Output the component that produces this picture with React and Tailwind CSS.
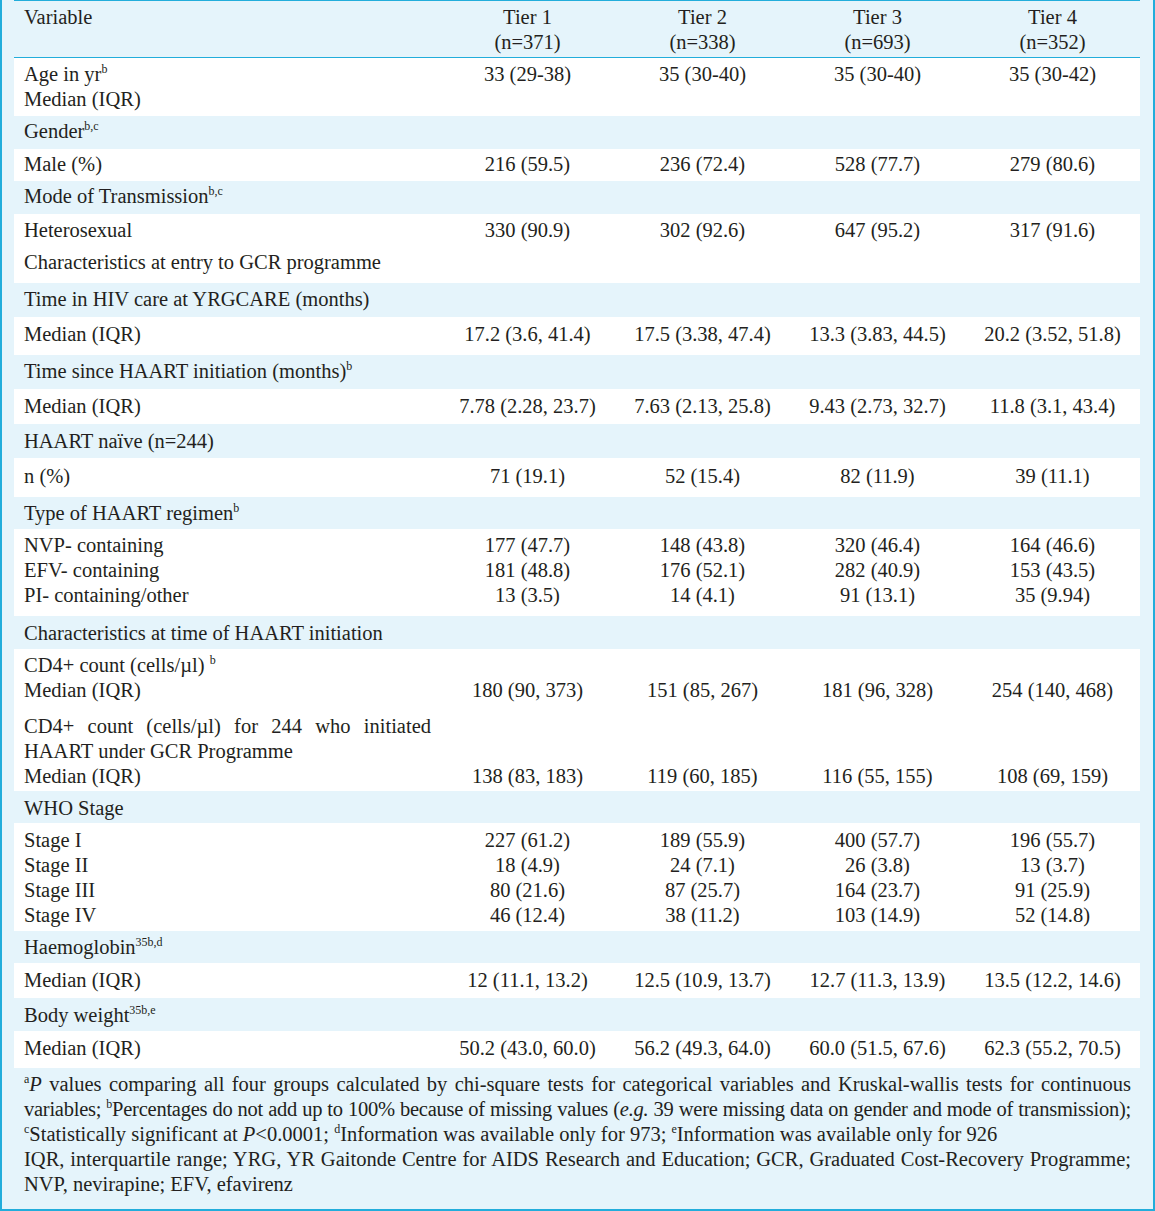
import React from "react";

const Sup = ({ children }) => (
    <span className="text-[12px] leading-none align-[8px]">{children}</span>
);

// each row: bg, height / padding classes, lines [label, values?]
const rows = [
    { white: true, cls: "h-[58px] pt-[4px]", lines: [[<>Age in yr<Sup>b</Sup></>, ["33 (29-38)", "35 (30-40)", "35 (30-40)", "35 (30-42)"]], ["Median (IQR)"]] },
    { cls: "h-[33px] pt-[3px]", lines: [[<>Gender<Sup>b,c</Sup></>]] },
    { white: true, cls: "h-[32px] pt-[3px]", lines: [["Male (%)", ["216 (59.5)", "236 (72.4)", "528 (77.7)", "279 (80.6)"]]] },
    { cls: "h-[33px] pt-[3px]", lines: [[<>Mode of Transmission<Sup>b,c</Sup></>]] },
    { white: true, cls: "h-[32px] pt-[4px]", lines: [["Heterosexual", ["330 (90.9)", "302 (92.6)", "647 (95.2)", "317 (91.6)"]]] },
    { white: true, cls: "h-[37px] pt-[4px]", lines: [["Characteristics at entry to GCR programme"]] },
    { cls: "h-[34px] pt-[4px]", lines: [["Time in HIV care at YRGCARE (months)"]] },
    { white: true, cls: "h-[38px] pt-[5px]", lines: [["Median (IQR)", ["17.2 (3.6, 41.4)", "17.5 (3.38, 47.4)", "13.3 (3.83, 44.5)", "20.2 (3.52, 51.8)"]]] },
    { cls: "h-[34px] pt-[4px]", lines: [[<>Time since HAART initiation (months)<Sup>b</Sup></>]] },
    { white: true, cls: "h-[35px] pt-[5px]", lines: [["Median (IQR)", ["7.78 (2.28, 23.7)", "7.63 (2.13, 25.8)", "9.43 (2.73, 32.7)", "11.8 (3.1, 43.4)"]]] },
    { cls: "h-[34px] pt-[5px]", lines: [["HAART naïve (n=244)"]] },
    { white: true, cls: "h-[39px] pt-[6px]", lines: [["n (%)", ["71 (19.1)", "52 (15.4)", "82 (11.9)", "39 (11.1)"]]] },
    { cls: "h-[32px] pt-[4px]", lines: [[<>Type of HAART regimen<Sup>b</Sup></>]] },
    {
        white: true, cls: "h-[87px] pt-[4px]", lines: [
            ["NVP- containing", ["177 (47.7)", "148 (43.8)", "320 (46.4)", "164 (46.6)"]],
            ["EFV- containing", ["181 (48.8)", "176 (52.1)", "282 (40.9)", "153 (43.5)"]],
            ["PI- containing/other", ["13 (3.5)", "14 (4.1)", "91 (13.1)", "35 (9.94)"]],
        ],
    },
    { cls: "h-[33px] pt-[5px]", lines: [["Characteristics at time of HAART initiation"]] },
    {
        white: true, cls: "h-[60px] pt-[4px]", lines: [
            [<>CD4+ count (cells/µl) <Sup>b</Sup></>],
            ["Median (IQR)", ["180 (90, 373)", "151 (85, 267)", "181 (96, 328)", "254 (140, 468)"]],
        ],
    },
    {
        white: true, cls: "h-[82px] pt-[5px]", lines: [
            [<div className="text-justify [text-align-last:justify]">CD4+ count (cells/µl) for 244 who initiated</div>],
            ["HAART under GCR Programme"],
            ["Median (IQR)", ["138 (83, 183)", "119 (60, 185)", "116 (55, 155)", "108 (69, 159)"]],
        ],
    },
    { cls: "h-[32px] pt-[5px]", lines: [["WHO Stage"]] },
    {
        white: true, cls: "h-[108px] pt-[5px]", lines: [
            ["Stage I", ["227 (61.2)", "189 (55.9)", "400 (57.7)", "196 (55.7)"]],
            ["Stage II", ["18 (4.9)", "24 (7.1)", "26 (3.8)", "13 (3.7)"]],
            ["Stage III", ["80 (21.6)", "87 (25.7)", "164 (23.7)", "91 (25.9)"]],
            ["Stage IV", ["46 (12.4)", "38 (11.2)", "103 (14.9)", "52 (14.8)"]],
        ],
    },
    { cls: "h-[32px] pt-[4px]", lines: [[<>Haemoglobin<Sup>35b,d</Sup></>]] },
    { white: true, cls: "h-[35px] pt-[5px]", lines: [["Median (IQR)", ["12 (11.1, 13.2)", "12.5 (10.9, 13.7)", "12.7 (11.3, 13.9)", "13.5 (12.2, 14.6)"]]] },
    { cls: "h-[33px] pt-[5px]", lines: [[<>Body weight<Sup>35b,e</Sup></>]] },
    { white: true, cls: "h-[37px] pt-[5px]", lines: [["Median (IQR)", ["50.2 (43.0, 60.0)", "56.2 (49.3, 64.0)", "60.0 (51.5, 67.6)", "62.3 (55.2, 70.5)"]]] },
];

const Line = ({ label, values }) => (
    <div className="flex h-[25px]">
        <div className="w-[426px] pl-[10px] pr-[9px] whitespace-nowrap">{label}</div>
        {[0, 1, 2, 3].map((i) => (
            <div key={i} className="w-[175px] text-center whitespace-nowrap">
                {values ? values[i] : ""}
            </div>
        ))}
    </div>
);

export default function App() {
    return (
        <div className="w-[1155px] h-[1211px] bg-[#e5f4fb] border-l-2 border-r-2 border-b-2 border-[#22addb] pl-[12px] pr-[13px] text-[#231f20] font-['Liberation_Serif',serif] text-[20.5px] leading-[25px]">
            {/* Header */}
            <div className="h-[58px] border-t border-b border-[#22addb] pt-[4px]">
                <div className="flex h-[25px]">
                    <div className="w-[426px] pl-[10px]">Variable</div>
                    {["Tier 1", "Tier 2", "Tier 3", "Tier 4"].map((t) => (
                        <div key={t} className="w-[175px] text-center">{t}</div>
                    ))}
                </div>
                <div className="flex h-[25px]">
                    <div className="w-[426px]" />
                    {["(n=371)", "(n=338)", "(n=693)", "(n=352)"].map((t) => (
                        <div key={t} className="w-[175px] text-center">{t}</div>
                    ))}
                </div>
            </div>

            {/* Body */}
            {rows.map((r, idx) => (
                <div key={idx} className={`${r.cls} ${r.white ? "bg-white" : ""}`}>
                    {r.lines.map((l, j) => (
                        <Line key={j} label={l[0]} values={l[1]} />
                    ))}
                </div>
            ))}

            {/* Footnotes */}
            <div className="pt-[4px] pl-[10px] pr-[9px]">
                <div className="whitespace-nowrap text-justify [text-align-last:justify]">
                    <Sup>a</Sup><i>P</i> values comparing all four groups calculated by chi-square tests for categorical variables and Kruskal-wallis tests for continuous
                </div>
                <div className="whitespace-nowrap text-justify [text-align-last:justify] tracking-[-0.25px]">
                    variables; <Sup>b</Sup>Percentages do not add up to 100% because of missing values (<i>e.g.</i> 39 were missing data on gender and mode of transmission);
                </div>
                <div className="whitespace-nowrap">
                    <Sup>c</Sup>Statistically significant at <i>P</i>&lt;0.0001; <Sup>d</Sup>Information was available only for 973; <Sup>e</Sup>Information was available only for 926
                </div>
                <div className="whitespace-nowrap text-justify [text-align-last:justify]">
                    IQR, interquartile range; YRG, YR Gaitonde Centre for AIDS Research and Education; GCR, Graduated Cost-Recovery Programme;
                </div>
                <div className="whitespace-nowrap">NVP, nevirapine; EFV, efavirenz</div>
            </div>
        </div>
    );
}
